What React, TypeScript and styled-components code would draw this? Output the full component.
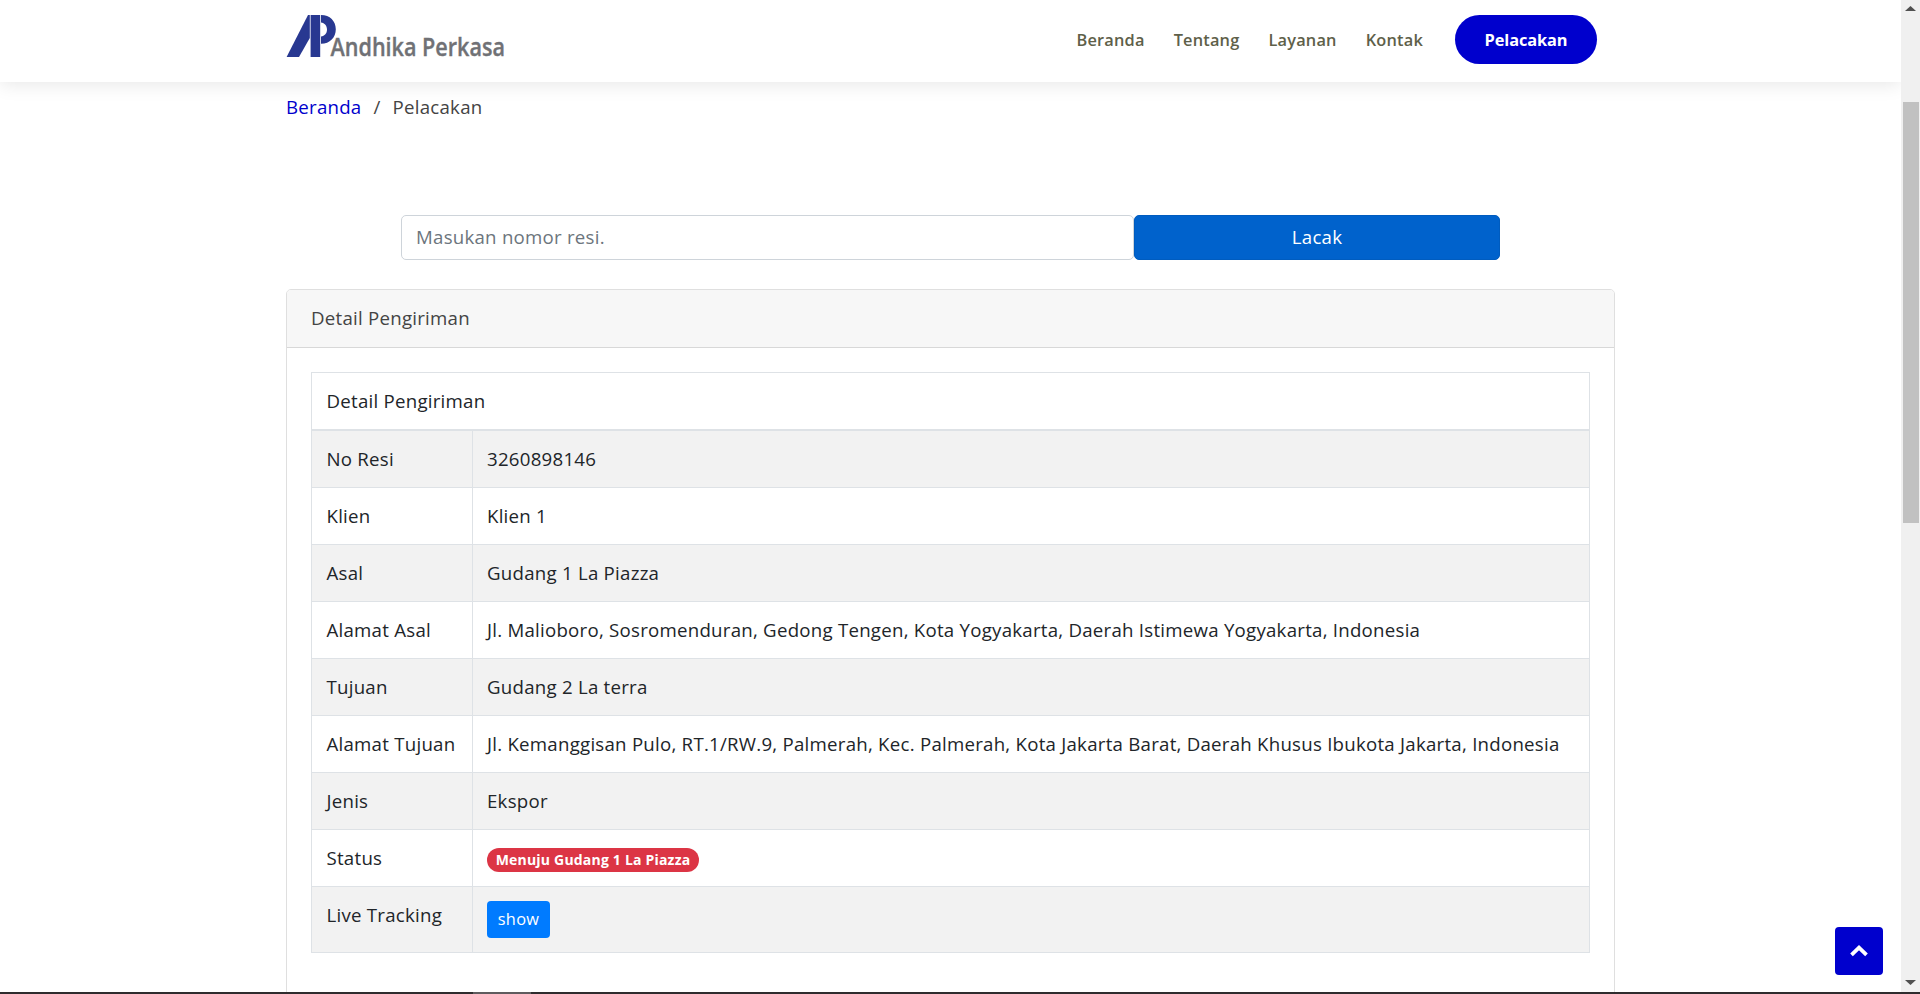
import React from "react";
import styled, { createGlobalStyle } from "styled-components";

const GlobalStyle = createGlobalStyle`
  *, *::before, *::after { box-sizing: border-box; }
  html, body { margin: 0; padding: 0; }
  body {
    background: #fff;
    color: #444;
    font-family: "Open Sans", sans-serif;
    font-size: 18.667px;
    letter-spacing: 0.245px;
    line-height: 28px;
    overflow: hidden;
  }
  a { color: #0000cd; text-decoration: none; }
`;

const Screen = styled.div`
  display: flex;
  flex-direction: column;
  width: 1920px;
  height: 994px;
  overflow: hidden;
`;

const Viewport = styled.div`
  display: flex;
  height: 992px;
`;

const Page = styled.div`
  width: 1901px;
  height: 992px;
  overflow: hidden;
  background: #fff;
`;

const Container = styled.div`
  width: 1329px;
  margin-left: 286px;
`;

const Header = styled.header`
  position: relative;
  height: 82px;
  background: #fff;
  box-shadow: 0 2px 18px rgba(0, 0, 0, 0.1);
`;

const HeaderInner = styled(Container)`
  display: flex;
  justify-content: space-between;
  align-items: flex-start;
  padding: 15px 18px 0 0;
`;

const Nav = styled.nav`
  display: flex;
  align-items: center;
  height: 49px;
  gap: 29px;
`;

const NavLink = styled.a`
  color: #5e6049;
  font-size: 16.35px;
  font-weight: 600;
  letter-spacing: 0.2px;
  white-space: nowrap;
`;

const TrackLink = styled.a`
  width: 142px;
  height: 49px;
  margin-left: 3px;
  border-radius: 25px;
  background: #0000cd;
  color: #fff;
  font-size: 16.35px;
  font-weight: 700;
  letter-spacing: -0.1px;
  line-height: 50px;
  text-align: center;
`;

const Breadcrumb = styled.ol`
  display: flex;
  gap: 12px;
  margin: 0;
  padding: 11px 0 0;
  list-style: none;
`;

const SearchForm = styled.form`
  display: flex;
  width: 1099px;
  margin: 94px 0 29px 115px;
`;

const SearchInput = styled.input`
  width: 733px;
  height: 45px;
  padding: 0 14px 2px;
  border: 1px solid #ced4da;
  border-radius: 5px;
  background: #fff;
  font: inherit;
  letter-spacing: inherit;
  outline: none;
  &::placeholder { color: #6c757d; opacity: 1; }
`;

const SearchButton = styled.button`
  width: 366px;
  height: 45px;
  padding: 0 0 2px;
  border: 1px solid #005cbf;
  border-radius: 5px;
  background: #0062cc;
  color: #fff;
  font: inherit;
  letter-spacing: inherit;
`;

const Card = styled.section`
  height: 800px;
  border: 1px solid #dfdfdf;
  border-radius: 5px;
  background: #fff;
`;

const CardHeader = styled.div`
  height: 58px;
  padding: 14px 24px;
  border-bottom: 1px solid #d8d8d8;
  border-radius: 4px 4px 0 0;
  background: #f7f7f7;
`;

const CardBody = styled.div`
  padding: 24px;
`;

const Table = styled.table`
  width: 1279px;
  border: 1px solid #dee2e6;
  border-bottom: 0;
  border-collapse: separate;
  border-spacing: 0;
  table-layout: fixed;
  color: #212529;
`;

const LabelColumn = styled.col`
  width: 161px;
`;

const HeadCell = styled.th`
  height: 58px;
  padding: 14px 14.5px;
  border-bottom: 2px solid #dee2e6;
  font-weight: 400;
  text-align: left;
  vertical-align: top;
`;

const Row = styled.tr<{ $tall?: boolean }>`
  height: ${(p) => (p.$tall ? 66 : 57)}px;
  &:nth-child(odd) { background: #f2f2f2; }
`;

const Cell = styled.td<{ $label?: boolean }>`
  padding: 14px 0 0 ${(p) => (p.$label ? 14.5 : 14)}px;
  border-bottom: 1px solid #dee2e6;
  border-right: ${(p) => (p.$label ? "1px solid #dee2e6" : "0")};
  vertical-align: top;
  white-space: nowrap;
`;

const Badge = styled.span`
  display: block;
  width: 212px;
  height: 24px;
  margin-top: 4px;
  border-radius: 12px;
  background: #dc3545;
  color: #fff;
  font-size: 14px;
  font-weight: 700;
  letter-spacing: 0.2px;
  line-height: 24px;
  text-align: center;
`;

const ShowButton = styled.button`
  display: block;
  width: 63px;
  height: 37px;
  padding: 0;
  border: 0;
  border-radius: 4px;
  background: #007bff;
  color: #fff;
  font: 16.333px/37px "Open Sans", sans-serif;
  letter-spacing: 0.35px;
`;

const BackToTop = styled.a`
  position: absolute;
  left: 1835px;
  top: 927px;
  display: flex;
  align-items: center;
  justify-content: center;
  width: 48px;
  height: 48px;
  border-radius: 4px;
  background: #0000cd;
`;

const ScrollTrack = styled.div`
  display: flex;
  flex-direction: column;
  align-items: center;
  width: 19px;
  padding: 6px 0 7px;
  background: #f0f0f0;
`;

const ScrollThumb = styled.div`
  width: 16px;
  height: 421px;
  margin: 91px 0 auto 1px;
  background: #c1c1c1;
`;

const Taskbar = styled.div`
  height: 2px;
  padding-left: 473px;
  background: #2f2c2e;
`;

const TaskbarItem = styled.div`
  width: 58px;
  height: 2px;
  background: #5f5c5e;
`;

const LogoSvg = styled.svg`
  display: block;
  overflow: visible;
`;

const Logo = () => (
  <LogoSvg width="240" height="60" viewBox="0 0 240 60" aria-label="Andhika Perkasa">
    <g fill="#283891">
      <path d="M22 0H23.8V23L13 42H0.6Z" />
      <path d="M24.6 0H34.2V42H24.6Z" />
      <path d="M35 0C44 0 49.8 6 49.8 14.3C49.8 22.6 44 28.8 35 28.8V21.5C38.7 21 41 18.3 41 14.5C41 10.7 38.7 8 35 7.4Z" />
    </g>
    <text
      x="44.5"
      y="41"
      fill="#707175"
      stroke="#707175"
      strokeWidth="0.35"
      fontFamily="Open Sans, sans-serif"
      fontSize="24.5"
      fontWeight="600"
      letterSpacing="0"
      textLength="174.5"
      lengthAdjust="spacingAndGlyphs"
    >
      Andhika Perkasa
    </text>
  </LogoSvg>
);

const details: [string, React.ReactNode][] = [
  ["No Resi", "3260898146"],
  ["Klien", "Klien 1"],
  ["Asal", "Gudang 1 La Piazza"],
  ["Alamat Asal", "Jl. Malioboro, Sosromenduran, Gedong Tengen, Kota Yogyakarta, Daerah Istimewa Yogyakarta, Indonesia"],
  ["Tujuan", "Gudang 2 La terra"],
  ["Alamat Tujuan", "Jl. Kemanggisan Pulo, RT.1/RW.9, Palmerah, Kec. Palmerah, Kota Jakarta Barat, Daerah Khusus Ibukota Jakarta, Indonesia"],
  ["Jenis", "Ekspor"],
  ["Status", <Badge>Menuju Gudang 1 La Piazza</Badge>],
  ["Live Tracking", <ShowButton type="button">show</ShowButton>],
];

export default function App() {
  return (
    <Screen>
      <GlobalStyle />
      <Viewport>
        <Page>
          <Header>
            <HeaderInner>
              <Logo />
              <Nav>
                {["Beranda", "Tentang", "Layanan", "Kontak"].map((label) => (
                  <NavLink key={label} href="#">{label}</NavLink>
                ))}
                <TrackLink href="#">Pelacakan</TrackLink>
              </Nav>
            </HeaderInner>
          </Header>
          <Container>
            <Breadcrumb>
              <li><a href="#">Beranda</a></li>
              <li>/</li>
              <li>Pelacakan</li>
            </Breadcrumb>
            <SearchForm>
              <SearchInput placeholder="Masukan nomor resi." />
              <SearchButton type="button">Lacak</SearchButton>
            </SearchForm>
            <Card>
              <CardHeader>Detail Pengiriman</CardHeader>
              <CardBody>
                <Table>
                  <colgroup>
                    <LabelColumn />
                    <col />
                  </colgroup>
                  <thead>
                    <tr><HeadCell colSpan={2}>Detail Pengiriman</HeadCell></tr>
                  </thead>
                  <tbody>
                    {details.map(([label, value]) => (
                      <Row key={label} $tall={label === "Live Tracking"}>
                        <Cell $label>{label}</Cell>
                        <Cell>{value}</Cell>
                      </Row>
                    ))}
                  </tbody>
                </Table>
              </CardBody>
            </Card>
          </Container>
          <BackToTop href="#" aria-label="Back to top">
            <svg width="18" height="12" viewBox="0 0 18 12">
              <path d="M1.5 9.8L9 2.7L16.5 9.8" fill="none" stroke="#fff" strokeWidth="3.8" />
            </svg>
          </BackToTop>
        </Page>
        <ScrollTrack>
          <svg width="11" height="5" viewBox="0 0 11 5"><path d="M0 5L5.5 0L11 5Z" fill="#505050" /></svg>
          <ScrollThumb />
          <svg width="11" height="5" viewBox="0 0 11 5"><path d="M0 0L5.5 5L11 0Z" fill="#505050" /></svg>
        </ScrollTrack>
      </Viewport>
      <Taskbar><TaskbarItem /></Taskbar>
    </Screen>
  );
}
